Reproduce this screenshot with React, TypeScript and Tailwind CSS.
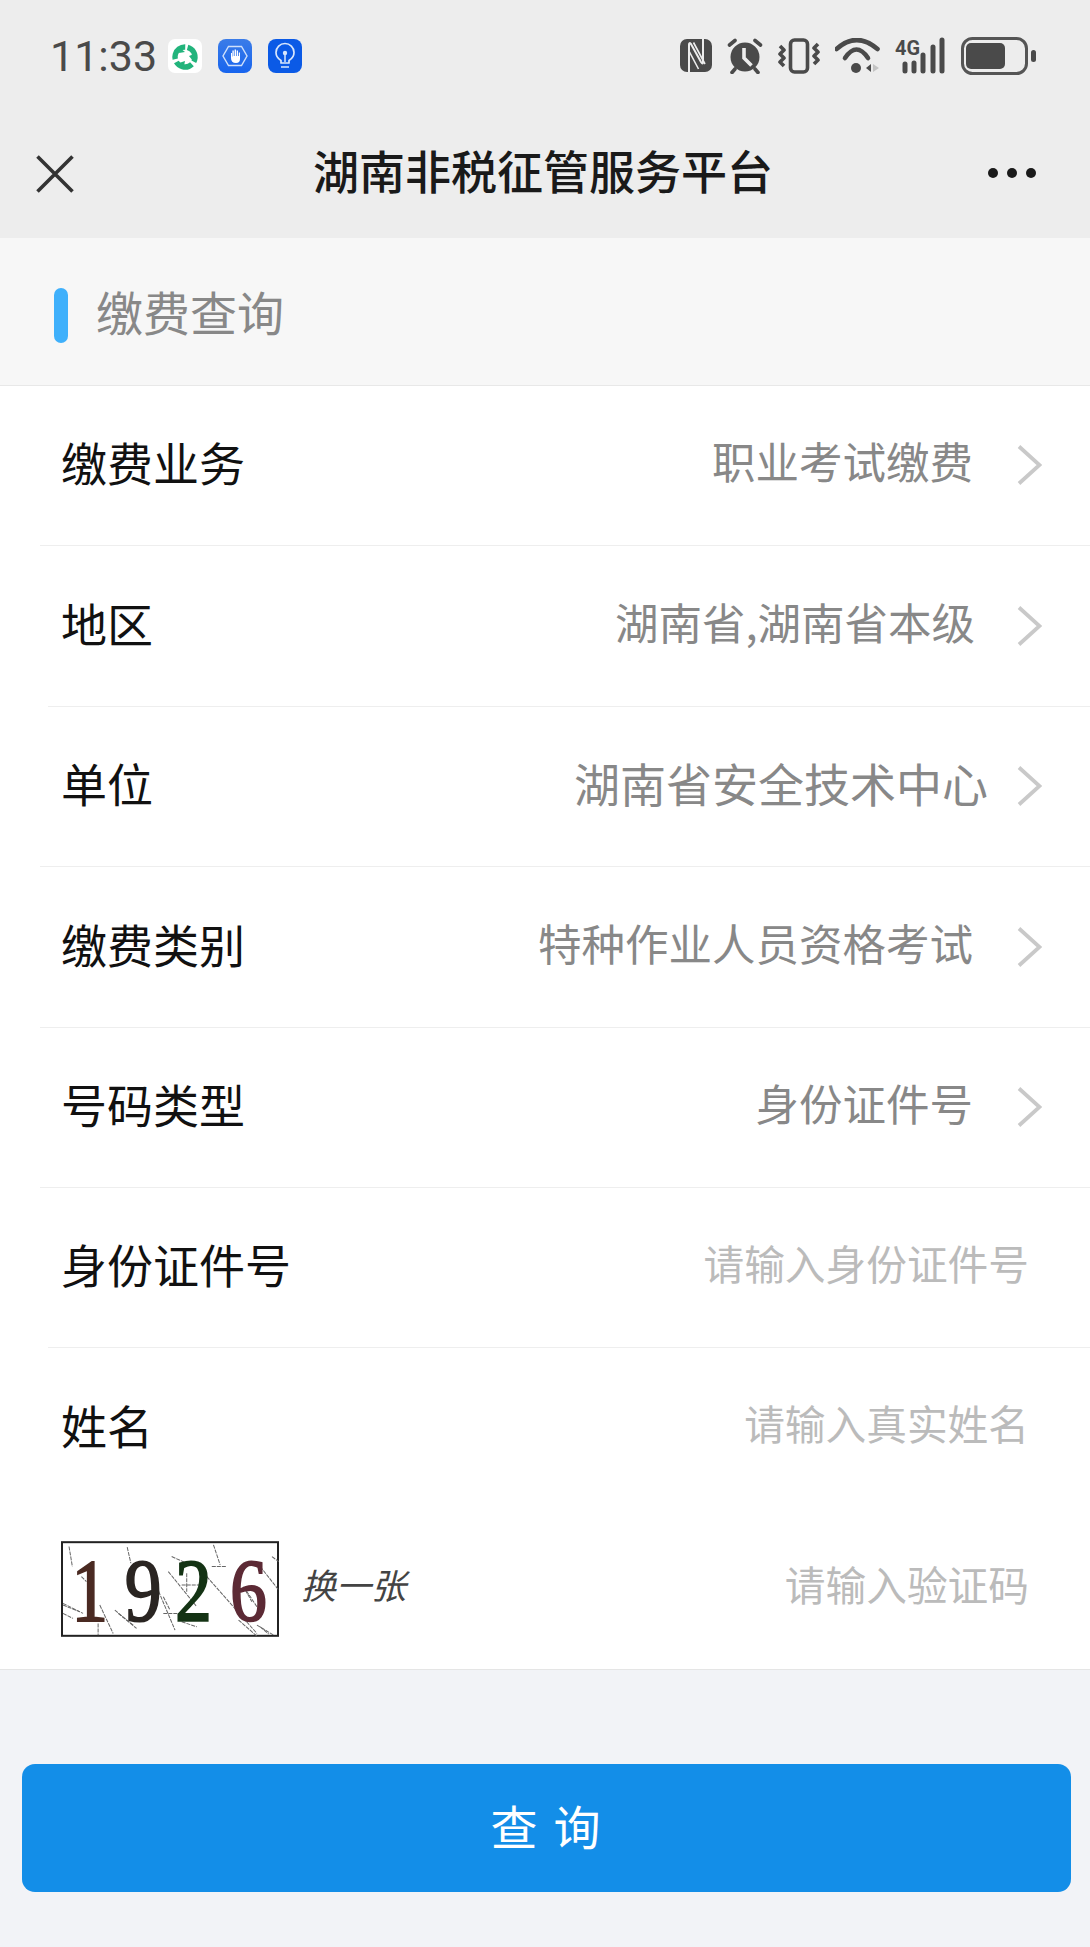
const rows = [
  { label: '缴费业务', value: '职业考试缴费', h: 'h-[160px]', inset: 'left-[40px]', gap: 'mr-[44px]', size: 'text-[43.5px]' },
  { label: '地区', value: '湖南省,湖南省本级', h: 'h-[161px]', inset: 'left-[48px]', gap: 'mr-[42px]', size: 'text-[43.5px]' },
  { label: '单位', value: '湖南省安全技术中心', h: 'h-[160px]', inset: 'left-[40px]', gap: 'mr-[29px]', size: 'text-[46px]' },
  { label: '缴费类别', value: '特种作业人员资格考试', h: 'h-[161px]', inset: 'left-[40px]', gap: 'mr-[44px]', size: 'text-[43.5px]' },
  { label: '号码类型', value: '身份证件号', h: 'h-[160px]', inset: 'left-[40px]', gap: 'mr-[44px]', size: 'text-[43.5px]' },
];

function Chevron() {
  return (
    <svg width="25" height="40" viewBox="0 0 25 40" fill="none" className="mb-[2px] shrink-0">
      <path d="M2 1.5 L22.5 20 L2 38.5" stroke="#c9c9c9" strokeWidth="3.8" />
    </svg>
  );
}

function GreenIcon() {
  return (
    <svg width="34" height="34" viewBox="0 0 34 34" fill="none">
      <rect width="34" height="34" rx="7" fill="#fff" />
      <circle cx="17" cy="18" r="10" stroke="#22b47c" strokeWidth="5.4" strokeDasharray="18 3" transform="rotate(-75 17 18)" />
      <path d="M12 9 L17 13 L11 14 Z M26 15 L21 17 L25 22 Z M11 24 L17 22 L16 27 Z" fill="#22b47c" />
    </svg>
  );
}

function HandIcon() {
  return (
    <svg width="34" height="34" viewBox="0 0 34 34" fill="none">
      <defs>
        <linearGradient id="hand-bg" x1="0" y1="0" x2="0" y2="1">
          <stop offset="0" stopColor="#3b7ce8" />
          <stop offset="1" stopColor="#1764ee" />
        </linearGradient>
      </defs>
      <rect width="34" height="34" rx="8" fill="url(#hand-bg)" />
      <path d="M10.5 7.5 H23.5 L29 17 L23.5 26.5 H10.5 L5 17 Z" stroke="#cfe0fb" strokeWidth="1.4" />
      <path d="M13 14 V19 Q13 24 18 24 Q22 24 22 20 V13.5 H20.8 V17 H20 V11.5 H18.7 V17 H18 V10.5 H16.6 V17 H15.8 V11.5 H14.4 V17.5 H14 V14 Z" fill="#fff" />
    </svg>
  );
}

function BulbIcon() {
  return (
    <svg width="34" height="34" viewBox="0 0 34 34" fill="none">
      <rect width="34" height="34" rx="8" fill="#0b5ae6" />
      <path d="M13 24 V21.5 Q8 18.5 8 13.5 A9 9 0 0 1 26 13.5 Q26 18.5 21 21.5 V24 Z M13 28 H21" stroke="#d9e7fc" strokeWidth="1.7" strokeLinejoin="round" />
      <circle cx="17" cy="14" r="2.2" fill="#d9e7fc" />
      <path d="M17 15 V23" stroke="#d9e7fc" strokeWidth="1.5" />
    </svg>
  );
}

function NfcIcon() {
  return (
    <svg width="32" height="33" viewBox="0 0 32 33" fill="none">
      <rect width="32" height="33" rx="7" fill="#4a4a4a" />
      <path d="M9 33 V5.5 Q9 3 11 5 L21 23 Q23 26 23 23 V0" stroke="#ededed" strokeWidth="2" />
      <path d="M13.5 3.5 L25 25 M9 12 L18.5 30" stroke="#ededed" strokeWidth="1.6" />
    </svg>
  );
}

function AlarmIcon() {
  return (
    <svg width="36" height="36" viewBox="0 0 36 36" fill="none">
      <circle cx="18" cy="19" r="14.5" fill="#4a4a4a" />
      <path d="M2.5 7 L8 2.5 M33.5 7 L28 2.5 M8 31 L5 34.5 M28 31 L31 34.5" stroke="#4a4a4a" strokeWidth="3.6" strokeLinecap="round" />
      <path d="M17 10 V20 L24.5 27.5" stroke="#ededed" strokeWidth="3.6" />
    </svg>
  );
}

function VibrateIcon() {
  return (
    <svg width="42" height="36" viewBox="0 0 42 36" fill="none">
      <rect x="12.5" y="2" width="17" height="32" rx="4" stroke="#4a4a4a" strokeWidth="3.6" />
      <path d="M2 8 L6 12 L2 16 L6 20 L2 24 L6 28" stroke="#4a4a4a" strokeWidth="3.6" strokeLinejoin="round" />
      <path d="M40 6 L36 10 L40 14 L36 18 L40 22 L36 26" stroke="#4a4a4a" strokeWidth="3.6" strokeLinejoin="round" />
    </svg>
  );
}

function WifiIcon() {
  return (
    <svg width="45" height="36" viewBox="0 0 45 36" fill="none">
      <path d="M1.5 11 Q21.5 -7 42.5 11" stroke="#4a4a4a" strokeWidth="4.6" strokeLinecap="round" />
      <path d="M10 20 Q21.5 3 33 20" stroke="#4a4a4a" strokeWidth="4.6" strokeLinecap="round" />
      <circle cx="21" cy="30" r="5" fill="#4a4a4a" />
      <path d="M36 26 L31 30 L36 34 Z" fill="#4a4a4a" />
      <path d="M38 26 L44 30 L38 34 Z" fill="#c4c4c4" />
    </svg>
  );
}

function SignalIcon() {
  return (
    <svg width="51" height="36" viewBox="0 0 51 36" fill="none" className="overflow-visible">
      <text x="0" y="17" fontSize="21" fontWeight="700" fill="#4a4a4a" textLength="25" lengthAdjust="spacingAndGlyphs" fontFamily="Roboto, sans-serif">
        4G
      </text>
      <path d="M10 26 V33 M19 25 V33 M28 17 V33 M38 9 V33 M47 2 V33" stroke="#4a4a4a" strokeWidth="5" strokeLinecap="round" />
    </svg>
  );
}

function BatteryIcon() {
  return (
    <svg width="75" height="38" viewBox="0 0 75 38" fill="none">
      <rect x="1.5" y="1.5" width="64" height="35" rx="10" stroke="#555" strokeWidth="3" />
      <rect x="5" y="6" width="39" height="26" rx="5" fill="#4a4a4a" />
      <rect x="70" y="13" width="5" height="12" rx="2.5" fill="#4a4a4a" />
    </svg>
  );
}

function Captcha() {
  const noise = [
    'M118 110 L128 170', 'M292 112 L303 160', 'M425 140 L470 160', 'M415 185 L500 290', 'M550 105 L570 165',
    'M545 170 L590 170', 'M470 190 L470 245', 'M455 225 L510 225', 'M530 200 L680 370', 'M690 170 L745 240',
    'M400 310 L460 310', 'M100 280 L160 310', 'M210 285 L250 370', 'M255 300 L320 355', 'M205 340 L205 375',
    'M380 230 L435 360', 'M640 230 L680 290', 'M625 330 L680 378', 'M680 345 L730 375', 'M725 140 L745 155',
    'M100 310 L130 325', 'M455 335 L500 350', 'M155 200 L170 215', 'M645 240 L665 275', 'M265 310 L310 345',
    'M400 260 L420 300', 'M100 285 L150 305', 'M690 350 L715 372',
  ];
  const digits = [
    { ch: '1', x: 180, color: '#4a2a22' },
    { ch: '9', x: 340, color: '#2a2522' },
    { ch: '2', x: 490, color: '#143314' },
    { ch: '6', x: 655, color: '#5c2a35' },
  ];
  return (
    <svg width="218" height="96" viewBox="94 94 652 286" className="shrink-0 overflow-visible">
      <rect x="97" y="97" width="646" height="280" fill="#fff" stroke="#222" strokeWidth="6" />
      {noise.map((d) => (
        <path key={d} d={d} stroke="#666" strokeWidth="3" strokeDasharray="12 3" fill="none" />
      ))}
      {digits.map((d) => (
        <text
          key={d.ch}
          transform={`translate(${d.x} 330) scale(1.15 1.4)`}
          textAnchor="middle"
          fontSize="192"
          fontFamily="'Liberation Serif', serif"
          fill={d.color}
          stroke={d.color}
          strokeWidth="4"
        >
          {d.ch}
        </text>
      ))}
    </svg>
  );
}

export default function App() {
  return (
    <div className="flex min-h-[1947px] w-[1090px] flex-col bg-[#f2f3f7] font-['Noto_Sans_CJK_SC',sans-serif]">
      <div className="h-[238px] shrink-0 bg-[#ededed]">
        <div className="flex h-[110px] items-center justify-between pt-[1px] pl-[50px] pr-[54px]">
          <div className="flex items-center gap-4">
            <span className="mt-[1px] w-[102px] font-['Roboto',sans-serif] text-[43px] leading-none text-[#4a4a4a]">11:33</span>
            <GreenIcon />
            <HandIcon />
            <BulbIcon />
          </div>
          <div className="flex items-center gap-[15px]">
            <NfcIcon />
            <AlarmIcon />
            <VibrateIcon />
            <WifiIcon />
            <SignalIcon />
            <BatteryIcon />
          </div>
        </div>
        <div className="grid h-[128px] grid-cols-[108px_1fr_112px] items-center">
          <div className="flex pl-[36px]">
            <svg width="38" height="38" viewBox="0 0 38 38" fill="none">
              <path d="M1.5 1.5 L36.5 36.5 M36.5 1.5 L1.5 36.5" stroke="#333" strokeWidth="3.6" />
            </svg>
          </div>
          <h1 className="mb-[10px] text-center text-[46px] leading-none font-medium text-[#1a1a1a]">湖南非税征管服务平台</h1>
          <div className="mb-[2px] flex justify-end gap-[9px] pr-[54px]">
            <span className="h-[10px] w-[10px] rounded-full bg-[#1a1a1a]" />
            <span className="h-[10px] w-[10px] rounded-full bg-[#1a1a1a]" />
            <span className="h-[10px] w-[10px] rounded-full bg-[#1a1a1a]" />
          </div>
        </div>
      </div>

      <div className="flex h-[148px] shrink-0 items-center border-b border-[#e8e8e8] bg-[#f7f7f7] pt-[8px] pl-[54px]">
        <span className="h-[55px] w-[14px] rounded-full bg-[#3fb0fb]" />
        <span className="mb-[10px] ml-[28px] text-[47px] leading-none text-[#888]">缴费查询</span>
      </div>

      <div className="shrink-0 bg-white">
        {rows.map((r) => (
          <div key={r.label} className={`relative flex items-center pr-[48px] pl-[61px] ${r.h}`}>
            <span className="mb-[10px] text-[46px] leading-none text-[#111]">{r.label}</span>
            <span className={`mb-[10px] ml-auto leading-none text-[#888] ${r.size} ${r.gap}`}>{r.value}</span>
            <Chevron />
            <div className={`absolute right-0 bottom-0 h-px bg-[#eeeeee] ${r.inset}`} />
          </div>
        ))}
        <div className="relative flex h-[160px] items-center pr-[61px] pl-[61px]">
          <span className="mb-[10px] text-[46px] leading-none text-[#111]">身份证件号</span>
          <span className="mb-[10px] ml-auto text-[40.7px] leading-none text-[#bbb]">请输入身份证件号</span>
          <div className="absolute right-0 bottom-0 left-[48px] h-px bg-[#eeeeee]" />
        </div>
        <div className="flex h-[161px] items-center pr-[61px] pl-[61px]">
          <span className="mb-[10px] text-[46px] leading-none text-[#111]">姓名</span>
          <span className="mb-[10px] ml-auto text-[40.7px] leading-none text-[#bbb]">请输入真实姓名</span>
        </div>
        <div className="flex h-[161px] items-center border-b border-[#e5e5e5] pr-[61px] pl-[61px]">
          <Captcha />
          <span className="mb-[12px] ml-[22px] text-[35px] leading-none text-[#444] italic">换一张</span>
          <span className="mb-[10px] ml-auto text-[40.7px] leading-none text-[#bbb]">请输入验证码</span>
        </div>
      </div>

      <div className="pt-[94px] pr-[19px] pl-[22px]">
        <button className="flex h-[128px] w-full items-center justify-center rounded-[13px] bg-[#138ee8] pb-[8px] pl-[14px] text-[47px] leading-none tracking-[16px] text-white">
          查询
        </button>
      </div>
    </div>
  );
}
